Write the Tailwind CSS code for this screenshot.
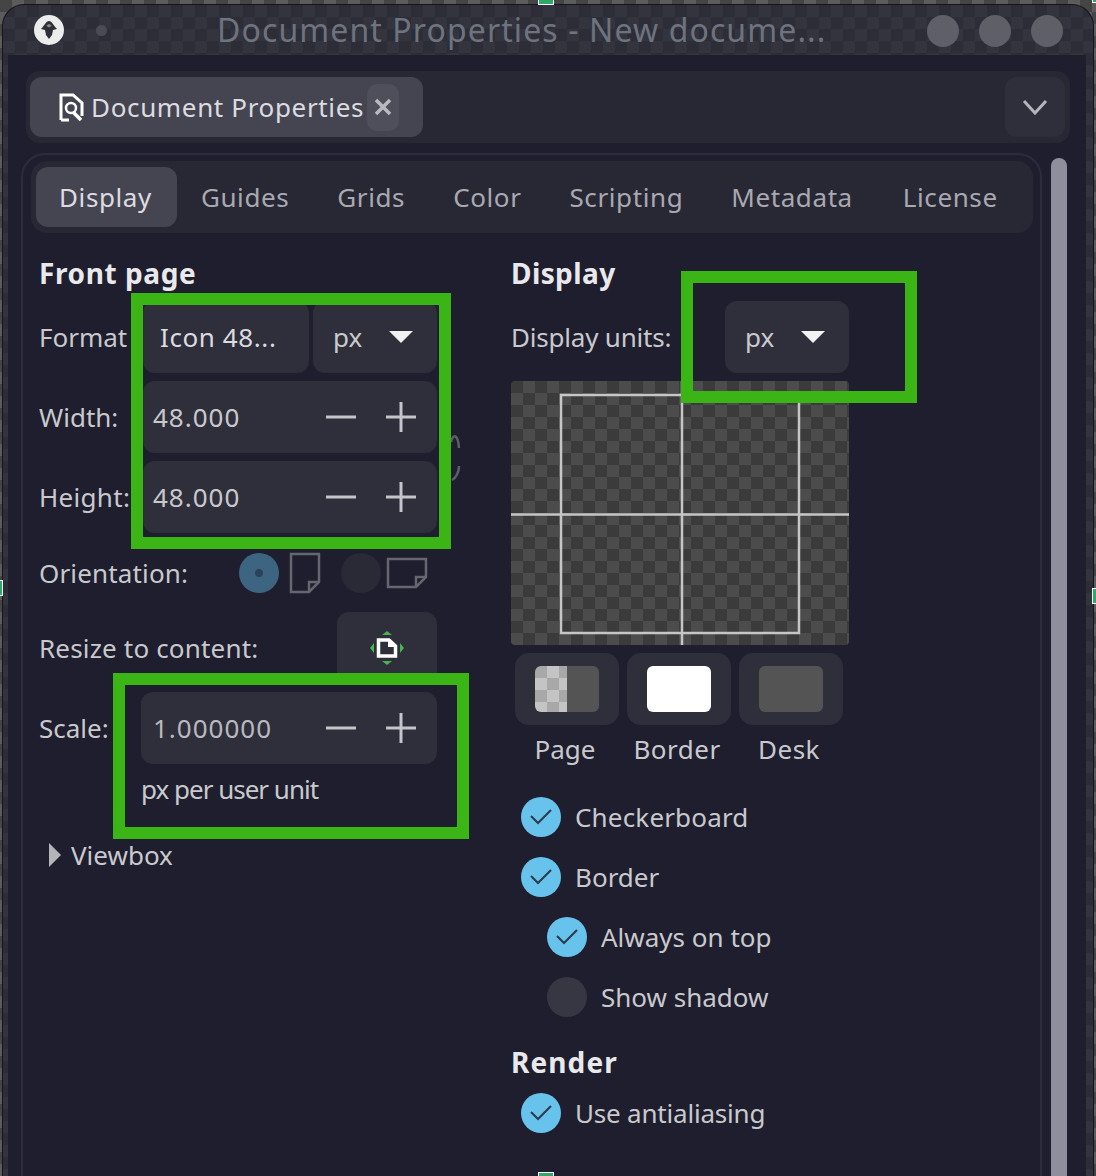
<!DOCTYPE html>
<html lang="en">
<head>
    <meta charset="UTF-8">
    <title>Document Properties</title>
    <script src="https://cdn.jsdelivr.net/npm/@tailwindcss/browser@4"></script>
</head>
<body class="bg-[#555555]">
<div class="relative w-[1096px] h-[1176px] overflow-hidden font-['Noto_Sans',sans-serif] text-[26px] leading-none text-[#c9c9cd] bg-[repeating-conic-gradient(#5c5c5c_0_25%,#454545_0_50%)] bg-size-[24px_24px]">

    <!-- window -->
    <div class="mt-[4px] ml-[2px] w-[1092px] h-[1172px] pt-[1px] px-[1px] rounded-t-[22px] bg-[#15151c]">
    <div class="w-full h-full rounded-t-[21px] bg-[#2e2f39] bg-[repeating-conic-gradient(#33343e_0_25%,#2c2d37_0_50%)] bg-size-[24px_24px] flex flex-col">

        <!-- title bar -->
        <div class="relative h-[50px] shrink-0 flex items-center">
            <div class="ml-[31px] w-[30px] h-[30px] rounded-full bg-[#ececec] flex items-center justify-center">
                <svg width="22" height="22" viewBox="0 0 22 22"><path d="M11 2 C14 2 15 6 19 10 L15 11 L14 16 L11 20 L8 16 L7 11 L3 10 C7 6 8 2 11 2 Z" fill="#2f2f36"/><path d="M8.500 7 C9.500 4.500 12.500 4.500 13.500 7 L11 8.500 Z" fill="#8a8a90"/></svg>
            </div>
            <div class="ml-[32px] w-[11px] h-[11px] rounded-full bg-[#4a4b55]"></div>
            <div class="ml-[110px] text-[32px] tracking-[1.1px] text-[#6d737f] whitespace-nowrap">Document Properties - New docume...</div>
            <div class="absolute left-[924px] top-[10px] flex gap-[20px]">
                <div class="w-[32px] h-[32px] rounded-full bg-[#5f5f67]"></div>
                <div class="w-[32px] h-[32px] rounded-full bg-[#5f5f67]"></div>
                <div class="w-[32px] h-[32px] rounded-full bg-[#5f5f67]"></div>
            </div>
        </div>

        <!-- content -->
        <div class="ml-[5px] w-[1078px] grow bg-[#1e1e2e] pt-[16px] flex flex-col">

            <!-- dock strip -->
            <div class="ml-[18px] w-[1044px] h-[72px] shrink-0 rounded-[14px] bg-[#282835] flex items-center justify-between pl-[4px] pr-[5px]">
                <div class="w-[393px] h-[60px] rounded-[12px] bg-[#454552] flex items-center pl-[28px] text-[#dcdce0]">
                    <svg class="shrink-0" width="26" height="30" viewBox="0 0 26 30" fill="none" stroke="#ffffff" stroke-width="3"><path d="M3 28 V3 H15 L24 11 V24"/><path d="M3 28 H11"/><circle cx="13" cy="16" r="5" stroke-width="2.500"/><path d="M15 20 L23 28" stroke-width="3.500"/></svg>
                    <span class="ml-[7px] tracking-[0.65px] whitespace-nowrap">Document Properties</span>
                    <div class="ml-[3px] w-[32px] h-[47px] rounded-[10px] bg-[#4f4f5c] flex items-center justify-center">
                        <svg width="18" height="18" viewBox="0 0 18 18" stroke="#b9b9c0" stroke-width="3.500"><path d="M2 2 L16 16 M16 2 L2 16"/></svg>
                    </div>
                </div>
                <div class="w-[60px] h-[60px] rounded-[12px] bg-[#2f2f3c] flex items-center justify-center">
                    <svg width="26" height="16" viewBox="0 0 26 16" fill="none" stroke="#b4b4bc" stroke-width="3"><path d="M2 2 L13 14 L24 2"/></svg>
                </div>
            </div>

            <div class="flex grow min-h-0 mt-[10px]">
                <!-- notebook -->
                <div class="ml-[13px] w-[1021px] grow-0 shrink-0 border-t-2 border-x-2 border-[#2c2c3c] rounded-t-[24px] pt-[6px] pl-[16px]">
                    <div class="-ml-[8px] w-[1002px] h-[72px] rounded-[16px] bg-[#282835] flex items-center pl-[5px] text-[#a9a9b1] tracking-[0.6px]">
                        <div class="h-[60px] pl-[23px] pr-[25px] rounded-[12px] bg-[#454552] flex items-center text-[#dcdce0]">Display</div>
                        <div class="h-[60px] px-[24px] flex items-center">Guides</div>
                        <div class="h-[60px] px-[24px] flex items-center">Grids</div>
                        <div class="h-[60px] px-[24px] flex items-center">Color</div>
                        <div class="h-[60px] px-[24px] flex items-center">Scripting</div>
                        <div class="h-[60px] px-[24px] flex items-center">Metadata</div>
                        <div class="h-[60px] ml-[2px] px-[24px] flex items-center">License</div>
                    </div>

                    <div class="flex mt-[22px]">
                        <!-- left column -->
                        <div class="w-[398px] shrink-0">
                            <div class="h-[36px] flex items-center font-bold text-[28px] text-[#e9e9ec] tracking-[0.6px]">Front page</div>

                            <div class="mt-[10px] h-[72px] flex items-center">
                                <div class="w-[104px] shrink-0">Format</div>
                                <div class="w-[166px] h-[72px] rounded-[12px] bg-[#2f2f3c] flex items-center pl-[17px] text-[#dcdce0] tracking-[0.6px]">Icon 48...</div>
                                <div class="ml-[4px] w-[124px] h-[72px] rounded-[12px] bg-[#2f2f3c] flex items-center pl-[20px] justify-between pr-[24px]">
                                    <span>px</span>
                                    <svg width="24" height="12" viewBox="0 0 24 12"><path d="M0 0 H24 L12 12 Z" fill="#f2f2f2"/></svg>
                                </div>
                            </div>

                            <div class="mt-[8px] h-[72px] flex items-center">
                                <div class="w-[104px] shrink-0">Width:</div>
                                <div class="w-[294px] h-[72px] rounded-[12px] bg-[#2f2f3c] flex items-center pl-[10px]">
                                    <span class="grow tracking-[1px]">48.000</span>
                                    <svg width="30" height="30" viewBox="0 0 30 30" stroke="#c4c4c9" stroke-width="3"><path d="M0 15 H30"/></svg>
                                    <svg class="ml-[30px] mr-[21px]" width="30" height="30" viewBox="0 0 30 30" stroke="#c4c4c9" stroke-width="3"><path d="M0 15 H30 M15 0 V30"/></svg>
                                </div>
                            </div>

                            <div class="mt-[8px] h-[72px] flex items-center">
                                <div class="w-[104px] shrink-0 tracking-[0.3px]">Height:</div>
                                <div class="w-[294px] h-[72px] rounded-[12px] bg-[#2f2f3c] flex items-center pl-[10px]">
                                    <span class="grow tracking-[1px]">48.000</span>
                                    <svg width="30" height="30" viewBox="0 0 30 30" stroke="#c4c4c9" stroke-width="3"><path d="M0 15 H30"/></svg>
                                    <svg class="ml-[30px] mr-[21px]" width="30" height="30" viewBox="0 0 30 30" stroke="#c4c4c9" stroke-width="3"><path d="M0 15 H30 M15 0 V30"/></svg>
                                </div>
                            </div>

                            <div class="mt-[19px] h-[42px] flex items-center">
                                <div class="w-[200px] shrink-0 tracking-[0.15px]">Orientation:</div>
                                <div class="w-[40px] h-[40px] rounded-full bg-[#3d6582] flex items-center justify-center">
                                    <div class="w-[8px] h-[8px] rounded-full bg-[#2b4258]"></div>
                                </div>
                                <svg class="ml-[10px]" width="32" height="42" viewBox="0 0 32 42" fill="none" stroke="#66666f" stroke-width="2.500"><path d="M2 2 H30 V30 L20 40 H2 Z"/><path d="M30 30 H20 V40"/></svg>
                                <div class="ml-[20px] w-[40px] h-[40px] rounded-full bg-[#2a2a37]"></div>
                                <svg class="ml-[5px]" width="42" height="32" viewBox="0 0 42 32" fill="none" stroke="#66666f" stroke-width="2.500"><path d="M2 2 H40 V20 L30 30 H2 Z"/><path d="M40 20 H30 V30"/></svg>
                            </div>

                            <div class="mt-[18px] h-[72px] flex items-center">
                                <div class="w-[298px] shrink-0 tracking-[0.17px]">Resize to content:</div>
                                <div class="w-[100px] h-[72px] rounded-[12px] bg-[#2f2f3c] flex items-center justify-center">
                                    <svg width="36" height="36" viewBox="0 0 36 36"><path d="M9.500 10 H20 L26.500 16 V26 H9.500 Z" fill="none" stroke="#ffffff" stroke-width="3.500"/><path d="M19 9 V17 H27 Z" fill="#ffffff"/><path d="M13 5 H23 L18 1 Z M13 31 H23 L18 35 Z M5 13 V23 L1 18 Z M31 13 V23 L35 18 Z" fill="#47b44f"/></svg>
                                </div>
                            </div>

                            <div class="mt-[8px] h-[72px] flex items-center">
                                <div class="w-[102px] shrink-0">Scale:</div>
                                <div class="w-[296px] h-[72px] rounded-[12px] bg-[#2f2f3c] flex items-center pl-[12px] text-[#b9b9be]">
                                    <span class="grow tracking-[1px]">1.000000</span>
                                    <svg width="30" height="30" viewBox="0 0 30 30" stroke="#c4c4c9" stroke-width="3"><path d="M0 15 H30"/></svg>
                                    <svg class="ml-[30px] mr-[21px]" width="30" height="30" viewBox="0 0 30 30" stroke="#c4c4c9" stroke-width="3"><path d="M0 15 H30 M15 0 V30"/></svg>
                                </div>
                            </div>

                            <div class="mt-[10px] ml-[102px] h-[30px] flex items-center tracking-[-1px]">px per user unit</div>

                            <div class="mt-[36px] ml-[10px] h-[30px] flex items-center">
                                <svg width="12" height="24" viewBox="0 0 12 24"><path d="M0 0 L12 12 L0 24 Z" fill="#b4b4b9"/></svg>
                                <span class="ml-[10px]">Viewbox</span>
                            </div>
                        </div>

                        <!-- right column -->
                        <div class="ml-[74px] w-[338px] shrink-0">
                            <div class="h-[36px] flex items-center font-bold text-[28px] text-[#e9e9ec] tracking-[0.4px]">Display</div>

                            <div class="mt-[10px] h-[72px] flex items-center">
                                <div class="w-[214px] shrink-0 tracking-[-0.2px]">Display units:</div>
                                <div class="w-[124px] h-[72px] rounded-[12px] bg-[#2f2f3c] flex items-center pl-[20px] justify-between pr-[24px]">
                                    <span>px</span>
                                    <svg width="24" height="12" viewBox="0 0 24 12"><path d="M0 0 H24 L12 12 Z" fill="#f2f2f2"/></svg>
                                </div>
                            </div>

                            <div class="mt-[8px] w-[338px] h-[264px] rounded-[4px] overflow-hidden bg-[repeating-conic-gradient(#4c4c4c_0_25%,#3b3b3b_0_50%)] bg-size-[24px_24px]">
                                <svg width="338" height="264" viewBox="0 0 338 264" fill="none" stroke="#c6c6c6" stroke-width="2.500"><rect x="50" y="14" width="238" height="238"/><path d="M171 0 V264 M0 133.500 H338"/></svg>
                            </div>

                            <div class="mt-[8px] ml-[4px] flex gap-[8px]">
                                <div class="w-[104px] h-[72px] rounded-[14px] bg-[#2f2f3c] flex items-center justify-center">
                                    <div class="w-[64px] h-[46px] rounded-[6px] overflow-hidden flex">
                                        <div class="w-[32px] bg-[repeating-conic-gradient(#c4c4c4_0_25%,#a8a8a8_0_50%)] bg-size-[24px_24px]"></div>
                                        <div class="w-[32px] bg-[#545454]"></div>
                                    </div>
                                </div>
                                <div class="w-[104px] h-[72px] rounded-[14px] bg-[#2f2f3c] flex items-center justify-center">
                                    <div class="w-[64px] h-[46px] rounded-[6px] bg-white"></div>
                                </div>
                                <div class="w-[104px] h-[72px] rounded-[14px] bg-[#2f2f3c] flex items-center justify-center">
                                    <div class="w-[64px] h-[46px] rounded-[6px] bg-[#545454]"></div>
                                </div>
                            </div>
                            <div class="mt-[9px] ml-[2px] flex gap-[8px] h-[30px] items-center">
                                <div class="w-[104px] text-center">Page</div>
                                <div class="w-[104px] text-center tracking-[0.5px]">Border</div>
                                <div class="w-[104px] text-center tracking-[0.5px]">Desk</div>
                            </div>

                            <div class="mt-[33px] ml-[10px] h-[40px] flex items-center">
                                <div class="w-[40px] h-[40px] rounded-full bg-[#67c3ec] flex items-center justify-center">
                                    <svg width="22" height="16" viewBox="0 0 22 16" fill="none" stroke="#2c3a4a" stroke-width="2"><path d="M1 7 L8 14 L21 1"/></svg>
                                </div>
                                <span class="ml-[14px] tracking-[0.17px]">Checkerboard</span>
                            </div>
                            <div class="mt-[20px] ml-[10px] h-[40px] flex items-center">
                                <div class="w-[40px] h-[40px] rounded-full bg-[#67c3ec] flex items-center justify-center">
                                    <svg width="22" height="16" viewBox="0 0 22 16" fill="none" stroke="#2c3a4a" stroke-width="2"><path d="M1 7 L8 14 L21 1"/></svg>
                                </div>
                                <span class="ml-[14px]">Border</span>
                            </div>
                            <div class="mt-[20px] ml-[36px] h-[40px] flex items-center">
                                <div class="w-[40px] h-[40px] rounded-full bg-[#67c3ec] flex items-center justify-center">
                                    <svg width="22" height="16" viewBox="0 0 22 16" fill="none" stroke="#2c3a4a" stroke-width="2"><path d="M1 7 L8 14 L21 1"/></svg>
                                </div>
                                <span class="ml-[14px]">Always on top</span>
                            </div>
                            <div class="mt-[20px] ml-[36px] h-[40px] flex items-center">
                                <div class="w-[40px] h-[40px] rounded-full bg-[#373744]"></div>
                                <span class="ml-[14px]">Show shadow</span>
                            </div>

                            <div class="mt-[27px] h-[36px] flex items-center font-bold text-[28px] text-[#e9e9ec] tracking-[1.100px]">Render</div>

                            <div class="mt-[13px] ml-[10px] h-[40px] flex items-center">
                                <div class="w-[40px] h-[40px] rounded-full bg-[#67c3ec] flex items-center justify-center">
                                    <svg width="22" height="16" viewBox="0 0 22 16" fill="none" stroke="#2c3a4a" stroke-width="2"><path d="M1 7 L8 14 L21 1"/></svg>
                                </div>
                                <span class="ml-[14px] tracking-[-0.2px]">Use antialiasing</span>
                            </div>
                        </div>
                    </div>
                </div>

                <!-- scrollbar -->
                <div class="ml-[9px] mt-[5px] w-[16px] grow-0 rounded-t-[8px] bg-[#8e8e9c]"></div>
            </div>
        </div>
    </div>
    </div>

    <!-- chain link behind the first annotation -->
    <svg class="absolute left-[449px] top-[430px]" width="14" height="54" viewBox="0 0 14 54" fill="none" stroke="#5e5e68" stroke-width="2.500"><path d="M2 12 C4 3 9 4 10 18"/><path d="M10 36 C10 42 7 48 3 50"/></svg>

    <!-- annotation boxes -->
    <div class="absolute left-[131px] top-[293px] w-[320px] h-[256px] border-[12px] border-[#3bb515]"></div>
    <div class="absolute left-[113px] top-[673px] w-[356px] h-[166px] border-[12px] border-[#3bb515]"></div>
    <div class="absolute left-[681px] top-[271px] w-[236px] h-[132px] border-[12px] border-[#3bb515]"></div>

    <!-- selection handles -->
    <div class="absolute left-[538px] top-[-10px] w-[16px] h-[15px] bg-[#2fa868] border border-white"></div>
    <div class="absolute left-[538px] top-[1172px] w-[16px] h-[15px] bg-[#2fa868] border border-white"></div>
    <div class="absolute left-[-11px] top-[580px] w-[14px] h-[16px] bg-[#2fa868] border border-white"></div>
    <div class="absolute left-[1092px] top-[588px] w-[14px] h-[16px] bg-[#2fa868] border border-white"></div>
    <div class="absolute left-[1092px] top-[-10px] w-[14px] h-[13px] bg-[#2fa868] border border-white"></div>
</div>
</body>
</html>
